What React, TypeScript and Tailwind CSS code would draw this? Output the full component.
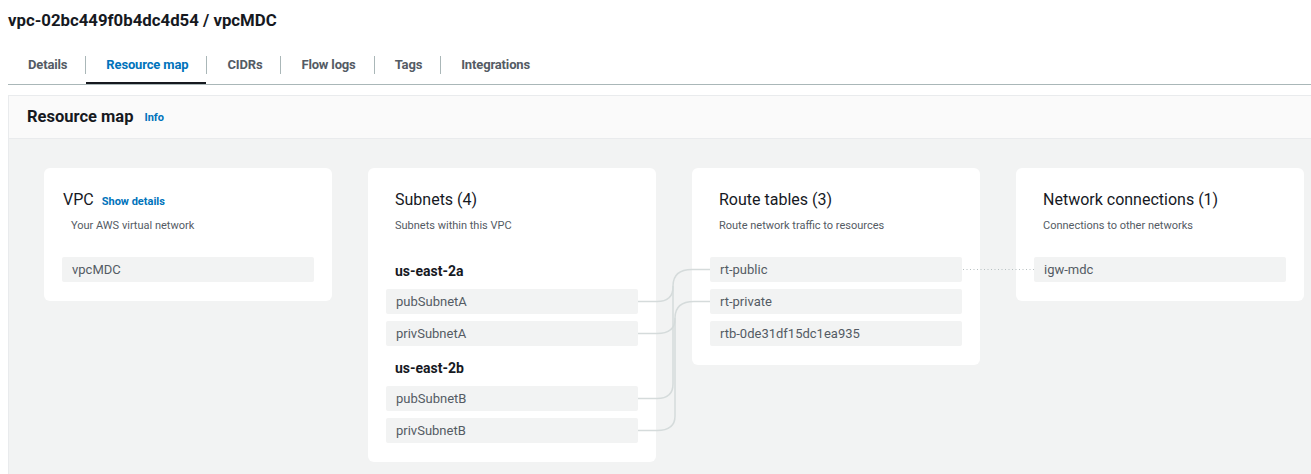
import React from "react";

const tabs = ["Details", "Resource map", "CIDRs", "Flow logs", "Tags", "Integrations"];

function Item({ label }: { label: string }) {
  return (
    <div className="h-[25px] rounded-[2px] bg-[#f2f3f3] px-[10px] flex items-center text-[13px] text-[#545b64]">
      {label}
    </div>
  );
}

function Card({
  title,
  subtitle,
  children,
}: {
  title: React.ReactNode;
  subtitle: string;
  children: React.ReactNode;
}) {
  return (
    <div className="w-[288px] shrink-0 rounded-[6px] bg-white px-[18px] pt-[22px] pb-[19px]">
      <div className="px-[9px] h-[20px] flex items-center text-[16px] text-[#16191f]">{title}</div>
      <div className="px-[9px] mt-[9px] h-[14px] flex items-center text-[11px] text-[#545b64]">{subtitle}</div>
      {children}
    </div>
  );
}

function Links() {
  const line = "#d5dbdb";
  return (
    <svg className="absolute left-0 top-0 pointer-events-none" width="1311" height="474" fill="none">
      <path d="M638 301.5 H657 C668 301.5 673 296 673 287 V286 C673 275 680 269.5 692 269.5 H710" stroke={line} strokeWidth="1.5" />
      <path d="M638 333.5 H657 C669 333.5 675 328 675 319 V318 C675 307 682 301.5 694 301.5 H710" stroke={line} strokeWidth="1.5" />
      <path d="M638 398.5 H657 C668 398.5 673 393 673 384 V286" stroke={line} strokeWidth="1.5" />
      <path d="M638 430.5 H657 C669 430.5 675 425 675 416 V318" stroke={line} strokeWidth="1.5" />
      <path d="M963 269.5 H1034" stroke="#b6bfc0" strokeWidth="1" strokeDasharray="1 2.5" />
    </svg>
  );
}

export default function App() {
  return (
    <div className="relative w-[1311px] h-[474px] overflow-hidden bg-white font-['Roboto',sans-serif]">
      <div className="h-[41px] pl-2 pt-[1px] flex items-center text-[16.8px] font-bold text-[#16191f]">
        vpc-02bc449f0b4dc4d54 / vpcMDC
      </div>

      <div className="ml-2 h-[44px] flex border-b border-[#aab7b8]">
        {tabs.map((t, i) => (
          <React.Fragment key={t}>
            {i > 0 && <div className="w-px h-[18px] mt-[15px] bg-[#aab7b8]" />}
            <div
              className={
                "relative pl-[20px] pr-[18px] pt-[14px] text-[13px] font-bold tracking-[-0.15px] " +
                (t === "Resource map" ? "text-[#0073bb]" : "text-[#545b64]")
              }
            >
              {t}
              {t === "Resource map" && (
                <div className="absolute left-0 right-0 bottom-0 h-[2px] bg-[#16191f]" />
              )}
            </div>
          </React.Fragment>
        ))}
      </div>

      <div className="ml-2 mt-[10px] w-[1340px] border border-[#e9ebed]">
        <div className="h-[43px] bg-[#fafafa] border-b border-[#e9ebed] px-[18px] flex items-center gap-[11px]">
          <span className="text-[16.5px] font-bold text-[#16191f]">Resource map</span>
          <span className="text-[11px] font-bold text-[#0073bb] mt-[2px]">Info</span>
        </div>
        <div className="h-[400px] bg-[#f2f3f3] pt-[29px] pl-[35px] flex items-start gap-[36px]">
          <Card
            title={
              <span className="-ml-[8px] flex items-baseline gap-[8px]">
                VPC <span className="text-[11px] font-bold text-[#0073bb]">Show details</span>
              </span>
            }
            subtitle="Your AWS virtual network"
          >
            <div className="mt-[24px]">
              <Item label="vpcMDC" />
            </div>
          </Card>

          <Card title="Subnets (4)" subtitle="Subnets within this VPC">
            <div className="mt-[28px] px-[9px] h-[20px] flex items-center text-[14px] font-bold text-[#16191f]">us-east-2a</div>
            <div className="mt-[8px] flex flex-col gap-[7px]">
              <Item label="pubSubnetA" />
              <Item label="privSubnetA" />
            </div>
            <div className="mt-[12px] px-[9px] h-[20px] flex items-center text-[14px] font-bold text-[#16191f]">us-east-2b</div>
            <div className="mt-[8px] flex flex-col gap-[7px]">
              <Item label="pubSubnetB" />
              <Item label="privSubnetB" />
            </div>
          </Card>

          <Card title="Route tables (3)" subtitle="Route network traffic to resources">
            <div className="mt-[24px] flex flex-col gap-[7px]">
              <Item label="rt-public" />
              <Item label="rt-private" />
              <Item label="rtb-0de31df15dc1ea935" />
            </div>
          </Card>

          <Card title="Network connections (1)" subtitle="Connections to other networks">
            <div className="mt-[24px]">
              <Item label="igw-mdc" />
            </div>
          </Card>
        </div>
      </div>

      <Links />
    </div>
  );
}
